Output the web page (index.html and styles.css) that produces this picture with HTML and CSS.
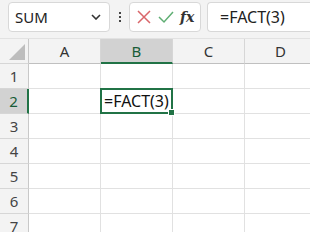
FILE: index.html
```
<!DOCTYPE html>
<html lang="ja">
<head>
<link rel="stylesheet" href="styles.css">
</head>
<body>
<div class="toolbar">
  <div class="name-box">
    <span>SUM</span>
    <svg class="chevron" width="10" height="6" viewBox="0 0 10 6"><path d="M1 1 L5 5 L9 1" fill="none" stroke="#333" stroke-width="1.6"/></svg>
  </div>
  <div class="dots"><i></i><i></i><i></i></div>
  <div class="buttons">
    <svg width="16" height="16" viewBox="0 0 16 16"><path d="M2 2 L14 14 M14 2 L2 14" stroke="#d9666a" stroke-width="1.5"/></svg>
    <svg width="18" height="16" viewBox="0 0 18 16"><path d="M2 8 L7 13 L16 3" fill="none" stroke="#5fae73" stroke-width="1.5"/></svg>
    <span class="fx">fx</span>
  </div>
  <div class="formula">=FACT(3)</div>
</div>
<div class="sheet">
  <div class="row head">
    <div class="rh corner"><span class="tri"></span></div>
    <div class="ch">A</div>
    <div class="ch sel">B</div>
    <div class="ch">C</div>
    <div class="ch">D</div>
  </div>
  <div class="row"><div class="rh">1</div><div class="c"></div><div class="c"></div><div class="c"></div><div class="c"></div></div>
  <div class="row"><div class="rh sel">2</div><div class="c"></div><div class="c active">=FACT(3)<span class="handle"></span></div><div class="c"></div><div class="c"></div></div>
  <div class="row"><div class="rh">3</div><div class="c"></div><div class="c"></div><div class="c"></div><div class="c"></div></div>
  <div class="row"><div class="rh">4</div><div class="c"></div><div class="c"></div><div class="c"></div><div class="c"></div></div>
  <div class="row"><div class="rh">5</div><div class="c"></div><div class="c"></div><div class="c"></div><div class="c"></div></div>
  <div class="row"><div class="rh">6</div><div class="c"></div><div class="c"></div><div class="c"></div><div class="c"></div></div>
  <div class="row"><div class="rh">7</div><div class="c"></div><div class="c"></div><div class="c"></div><div class="c"></div></div>
</div>
</body>
</html>
```

FILE: styles.css
```
body {
  margin: 0;
  width: 310px;
  height: 232px;
  overflow: hidden;
  font-family: "Noto Sans", "Open Sans", sans-serif;
  background: #fff;
}

.toolbar {
  display: flex;
  align-items: center;
  height: 39px;
  padding: 0 0 4px 8px;
  box-sizing: border-box;
  background: #f3f3f3;
  border-bottom: 1px solid #e2e2e2;
}

.name-box {
  display: flex;
  align-items: center;
  justify-content: space-between;
  width: 102px;
  height: 30px;
  box-sizing: border-box;
  padding: 0 8px 0 6px;
  background: #fff;
  border: 1px solid #d8d8d8;
  border-radius: 4px;
  font-size: 15px;
  color: #222;
}

.dots {
  display: flex;
  flex-direction: column;
  gap: 2px;
  margin: 0 8px 0 9px;
}

.dots i {
  width: 2px;
  height: 2px;
  background: #444;
}

.buttons {
  display: flex;
  align-items: center;
  justify-content: space-around;
  width: 72px;
  height: 30px;
  box-sizing: border-box;
  padding: 0 3px;
  background: #fff;
  border: 1px solid #d8d8d8;
  border-radius: 4px;
}

.fx {
  font-family: "DejaVu Serif", "Liberation Serif", serif;
  font-style: italic;
  font-weight: bold;
  font-size: 14px;
  color: #333;
}

.formula {
  display: flex;
  align-items: center;
  flex: 1;
  height: 30px;
  margin-left: 6px;
  padding-left: 12px;
  box-sizing: border-box;
  background: #fff;
  border: 1px solid #d8d8d8;
  border-right: none;
  border-radius: 4px 0 0 4px;
  font-size: 16px;
  color: #222;
}

.row {
  display: flex;
  height: 25px;
}

.rh, .ch, .c {
  flex: none;
  box-sizing: border-box;
  height: 25px;
  border-right: 1px solid #e1e1e1;
  border-bottom: 1px solid #e1e1e1;
}

.rh {
  width: 29px;
  display: flex;
  align-items: center;
  justify-content: center;
  background: #f3f3f3;
  border-right-color: #c8c8c8;
  border-bottom-color: #d6d6d6;
  font-size: 15px;
  color: #444;
}

.ch {
  width: 72px;
  display: flex;
  align-items: center;
  justify-content: center;
  background: #f3f3f3;
  border-right-color: #d6d6d6;
  border-bottom-color: #c0c0c0;
  font-size: 15px;
  color: #333;
}

.c {
  width: 72px;
}

.corner {
  position: relative;
}

.tri {
  position: absolute;
  right: 3px;
  bottom: 3px;
  width: 0;
  height: 0;
  border-left: 16px solid transparent;
  border-bottom: 16px solid #bdbdbd;
}

.ch.sel {
  background: #d2d2d2;
  border-bottom: 2px solid #217346;
  color: #185c37;
}

.rh.sel {
  background: #d2d2d2;
  border-right: 2px solid #217346;
  color: #185c37;
}

.c.active {
  position: relative;
  margin: -1px 0 0 -1px;
  width: 73px;
  height: 26px;
  border: 2px solid #217346;
  padding: 1px 0 0 2px;
  font-size: 16px;
  color: #111;
  line-height: 20px;
  white-space: nowrap;
}

.handle {
  position: absolute;
  right: -4px;
  bottom: -4px;
  width: 5px;
  height: 5px;
  background: #217346;
  border: 1px solid #fff;
}
```
